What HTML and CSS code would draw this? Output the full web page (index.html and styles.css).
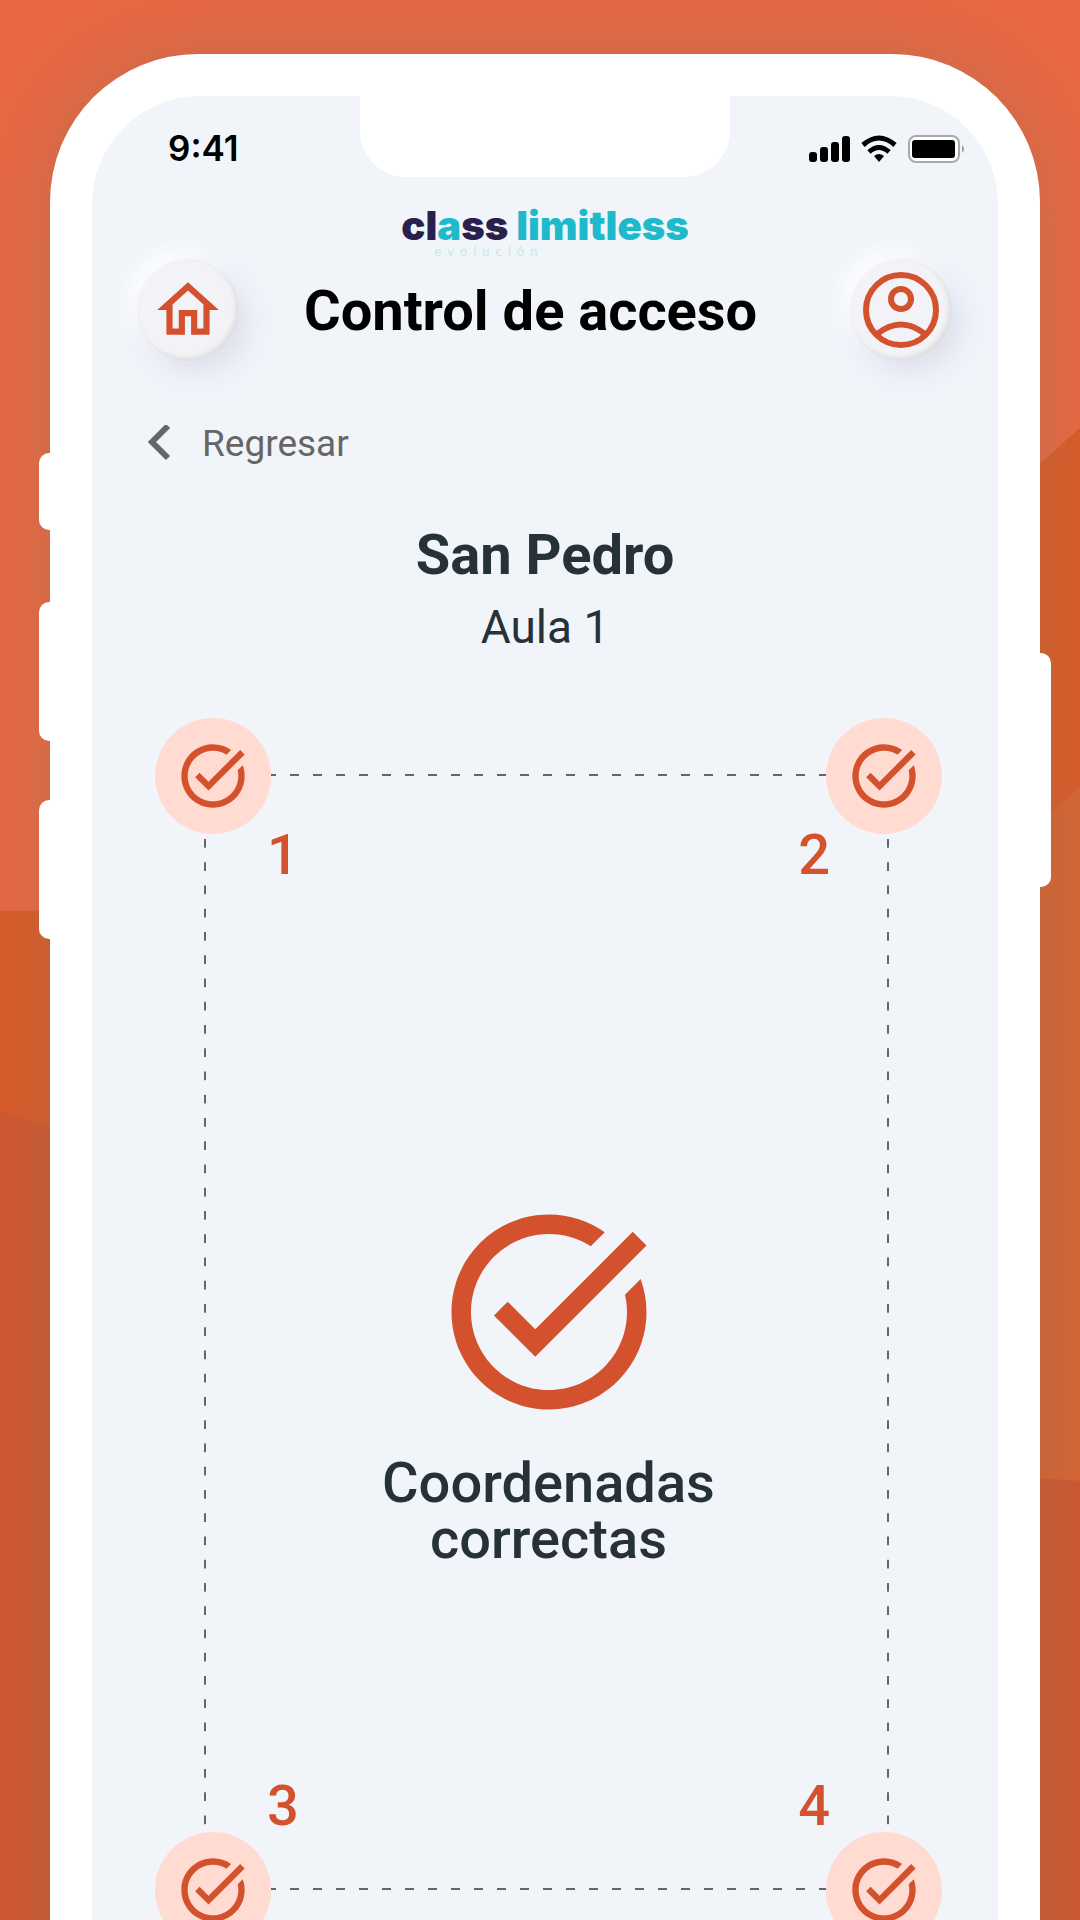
FILE: index.html
```html
<!DOCTYPE html>
<html lang="es">
<head>
    <meta charset="UTF-8">
    <meta name="viewport" content="width=device-width, initial-scale=1.0">
    <title>Control de acceso</title>
    <link rel="stylesheet" href="styles.css">
</head>
<body>
    <svg class="backdrop" viewBox="0 0 1080 1920" preserveAspectRatio="none" aria-hidden="true">
        <rect width="1080" height="1920" fill="#e86843"/>
        <path d="M0 911 L540 906 L1080 428 V1920 H0z" fill="#d95b27"/>
        <path d="M0 1111 L540 1268 L1080 787 V1920 H0z" fill="#d66432"/>
        <path d="M0 1111 L540 1268 V1920 H0z" fill="#d0572f"/>
        <path d="M540 1440 L1080 1481 V1920 H540z" fill="#cf5730"/>
    </svg>

    <div class="phone">
        <span class="side-key mute"></span>
        <span class="side-key volume-up"></span>
        <span class="side-key volume-down"></span>
        <span class="side-key power"></span>

        <div class="screen">
            <div class="status-bar">
                <span class="time">9:41</span>
                <span class="notch"></span>
                <svg class="status-icons" width="156" height="28" viewBox="0 0 156 28" aria-hidden="true">
                    <rect x="0" y="17" width="8" height="10" rx="3"/>
                    <rect x="11" y="12" width="8" height="15" rx="3"/>
                    <rect x="22" y="7" width="8" height="20" rx="3"/>
                    <rect x="33" y="1" width="8" height="26" rx="3"/>
                    <g fill="none" stroke="#000" stroke-width="5">
                        <path d="M54 10 Q70 -4 86 10"/>
                        <path d="M60 17 Q70 8 80 17"/>
                    </g>
                    <path d="M65 21 Q70 17 75 21 L70 27z"/>
                    <rect x="100" y="1" width="50" height="26" rx="7" fill="#fff" stroke="#aaa" stroke-width="2"/>
                    <rect x="103" y="5" width="43" height="18" rx="3"/>
                    <path d="M153 10 q4 4 0 8z" fill="#999"/>
                </svg>
            </div>

            <div class="logo">
                <div class="logo-name">cl<span>a</span>ss <span>limitless</span></div>
                <div class="logo-tagline">evolución</div>
            </div>

            <header class="header">
                <button class="round-btn" type="button" aria-label="Inicio">
                    <svg class="home-icon" width="74" height="74" viewBox="0 0 24 24">
                        <path d="M12 5.69l5 4.5V18h-2v-6H9v6H7v-7.81l5-4.5M12 3L2 12h3v8h6v-6h2v6h6v-8h3L12 3z"/>
                    </svg>
                </button>
                <h1>Control de acceso</h1>
                <button class="round-btn" type="button" aria-label="Perfil">
                    <svg class="profile-icon" width="76" height="76" viewBox="0 0 76 76">
                        <circle cx="38" cy="38" r="35"/>
                        <circle cx="38" cy="27" r="10"/>
                        <path d="M14 62 Q38 43 62 62"/>
                    </svg>
                </button>
            </header>

            <a class="back" href="#">
                <svg width="24" height="38" viewBox="0 0 24 38"><path d="M21 1 L5 17 L21 33"/></svg>
                Regresar
            </a>

            <div class="place">
                <h2>San Pedro</h2>
                <p>Aula 1</p>
            </div>

            <svg class="symbols" aria-hidden="true">
                <symbol id="task-check" viewBox="0 0 24 24">
                    <path d="M22 5.18L10.59 16.6l-4.24-4.24 1.41-1.41 2.83 2.83 10-10L22 5.18zm-2.21 5.04c.13.57.21 1.17.21 1.78 0 4.42-3.58 8-8 8s-8-3.58-8-8 3.58-8 8-8c1.58 0 3.04.46 4.28 1.25l1.44-1.44C16.1 2.67 14.13 2 12 2 6.48 2 2 6.48 2 12s4.48 10 10 10 10-4.48 10-10c0-1.19-.22-2.33-.6-3.39l-1.61 1.61z"/>
                </symbol>
            </svg>

            <main class="room">
                <div class="corner"><svg><use href="#task-check"/></svg></div>
                <div class="line-h"></div>
                <div class="corner"><svg><use href="#task-check"/></svg></div>

                <div class="line-v left"></div>
                <div class="room-inside">
                    <div class="numbers"><span>1</span><span>2</span></div>
                    <div class="result">
                        <svg><use href="#task-check"/></svg>
                        <p>Coordenadas<br>correctas</p>
                    </div>
                    <div class="numbers"><span>3</span><span>4</span></div>
                </div>
                <div class="line-v right"></div>

                <div class="corner"><svg><use href="#task-check"/></svg></div>
                <div class="line-h"></div>
                <div class="corner"><svg><use href="#task-check"/></svg></div>
            </main>
        </div>
    </div>
</body>
</html>
```
FILE: styles.css
```css
* {
    box-sizing: border-box;
}

body {
    margin: 0;
    height: 100vh;
    overflow: hidden;
    padding: 54px 40px 0 50px;
    font-family: Roboto, sans-serif;
    color: #263238;
}

h1, h2, p {
    margin: 0;
}

/* Fondo */
.backdrop {
    position: absolute;
    top: 0;
    left: 0;
    width: 100%;
    height: 100%;
    z-index: -1;
}

/* Marco del telefono */
.phone {
    position: relative;
    padding: 42px 42px 0;
    background: #fff;
    border-radius: 148px 148px 0 0;
    box-shadow: 0 0 80px rgba(150, 115, 90, 0.45);
}

.side-key {
    position: absolute;
    left: -11px;
    width: 24px;
    background: #fff;
    border-radius: 10px;
}

.mute {
    top: 399px;
    height: 77px;
}

.volume-up {
    top: 548px;
    height: 139px;
}

.volume-down {
    top: 746px;
    height: 139px;
}

.power {
    left: auto;
    right: -11px;
    top: 599px;
    height: 234px;
}

.screen {
    background: #f1f5fa;
    border-radius: 108px 108px 0 0;
    padding-bottom: 60px;
}

/* Barra de estado */
.status-bar {
    display: grid;
    grid-template-columns: 1fr 370px 1fr;
    height: 108px;
}

.time {
    padding: 30px 0 0 76px;
    font-family: Inter, sans-serif;
    font-size: 35px;
    line-height: 44px;
    font-weight: 600;
    color: #000;
}

.notch {
    height: 81px;
    background: #fff;
    border-radius: 0 0 46px 46px;
}

.status-icons {
    justify-self: end;
    margin: 39px 33px 0 0;
}

.logo {
    text-align: center;
    height: 55px;
}

.logo-name {
    font-family: Inter, sans-serif;
    font-size: 40px;
    line-height: 44px;
    font-weight: 900;
    color: #29204e;
}

.logo-name span {
    color: #20b9cc;
}

.logo-tagline {
    padding-right: 112px;
    font-family: Lato, sans-serif;
    font-size: 13px;
    line-height: 6px;
    letter-spacing: 6px;
    color: #c5eae3;
}

/* Cabecera */
.header {
    display: flex;
    align-items: center;
    padding: 0 46px 0 45px;
}

.header h1 {
    flex: 1;
    padding: 2px 0 0 65px;
    text-align: left;
    font-size: 56px;
    line-height: 64px;
    font-weight: 700;
    color: #000;
}

.round-btn {
    display: flex;
    align-items: center;
    justify-content: center;
    width: 102px;
    height: 102px;
    padding: 0;
    border: none;
    border-radius: 50%;
    background: #f3f3f7;
    box-shadow: 10px 12px 28px #dde0ec, -8px -8px 20px #fff,
        inset -3px -3px 5px #dcdce0, inset 2px 2px 4px #f4f4f5;
    cursor: pointer;
}

.home-icon,
.corner svg,
.result svg {
    fill: #d3522d;
}

.profile-icon {
    fill: none;
    stroke: #d3522d;
    stroke-width: 6;
}

.back {
    display: inline-flex;
    align-items: center;
    gap: 31px;
    margin: 60px 0 0 55px;
    font-size: 37px;
    line-height: 46px;
    color: #666;
    text-decoration: none;
}

.back svg {
    fill: none;
    stroke: #666;
    stroke-width: 6;
}

.place {
    margin-top: 56px;
    text-align: center;
}

.place h2 {
    font-size: 56px;
    line-height: 64px;
    font-weight: 700;
}

.place p {
    margin-top: 12px;
    font-size: 46px;
    line-height: 56px;
}

.symbols {
    display: none;
}

/* Plano del aula */
.room {
    display: grid;
    grid-template-columns: 116px 1fr 116px;
    padding: 0 56px 0 63px;
    margin-top: 63px;
}

.room-inside {
    padding-bottom: 5px;
}

.corner {
    display: flex;
    align-items: center;
    justify-content: center;
    height: 116px;
    border-radius: 50%;
    background: #ffdbd1;
}

.corner svg {
    width: 76px;
    height: 76px;
}

.line-h {
    height: 2px;
    margin-top: 56px;
    background: linear-gradient(90deg, #666 9px, transparent 9px) -4px 0 / 23px 2px repeat-x;
}

.line-v {
    width: 2px;
    margin: 5px 0 -7px;
    background: linear-gradient(#666 9px, transparent 9px) 0 0 / 2px 23px round;
}

.line-v.left {
    margin-left: 49px;
}

.line-v.right {
    margin-left: 61px;
}

.numbers {
    display: flex;
    justify-content: space-between;
    margin: 0 -4px;
    font-size: 56px;
    line-height: 42px;
    font-weight: 500;
    color: #d3522d;
}

.result {
    margin: 319px 0 218px;
    text-align: center;
    font-size: 56px;
    line-height: 56px;
    font-weight: 500;
}

.result svg {
    display: block;
    width: 234px;
    height: 234px;
    margin: 0 auto 26px;
}
```
